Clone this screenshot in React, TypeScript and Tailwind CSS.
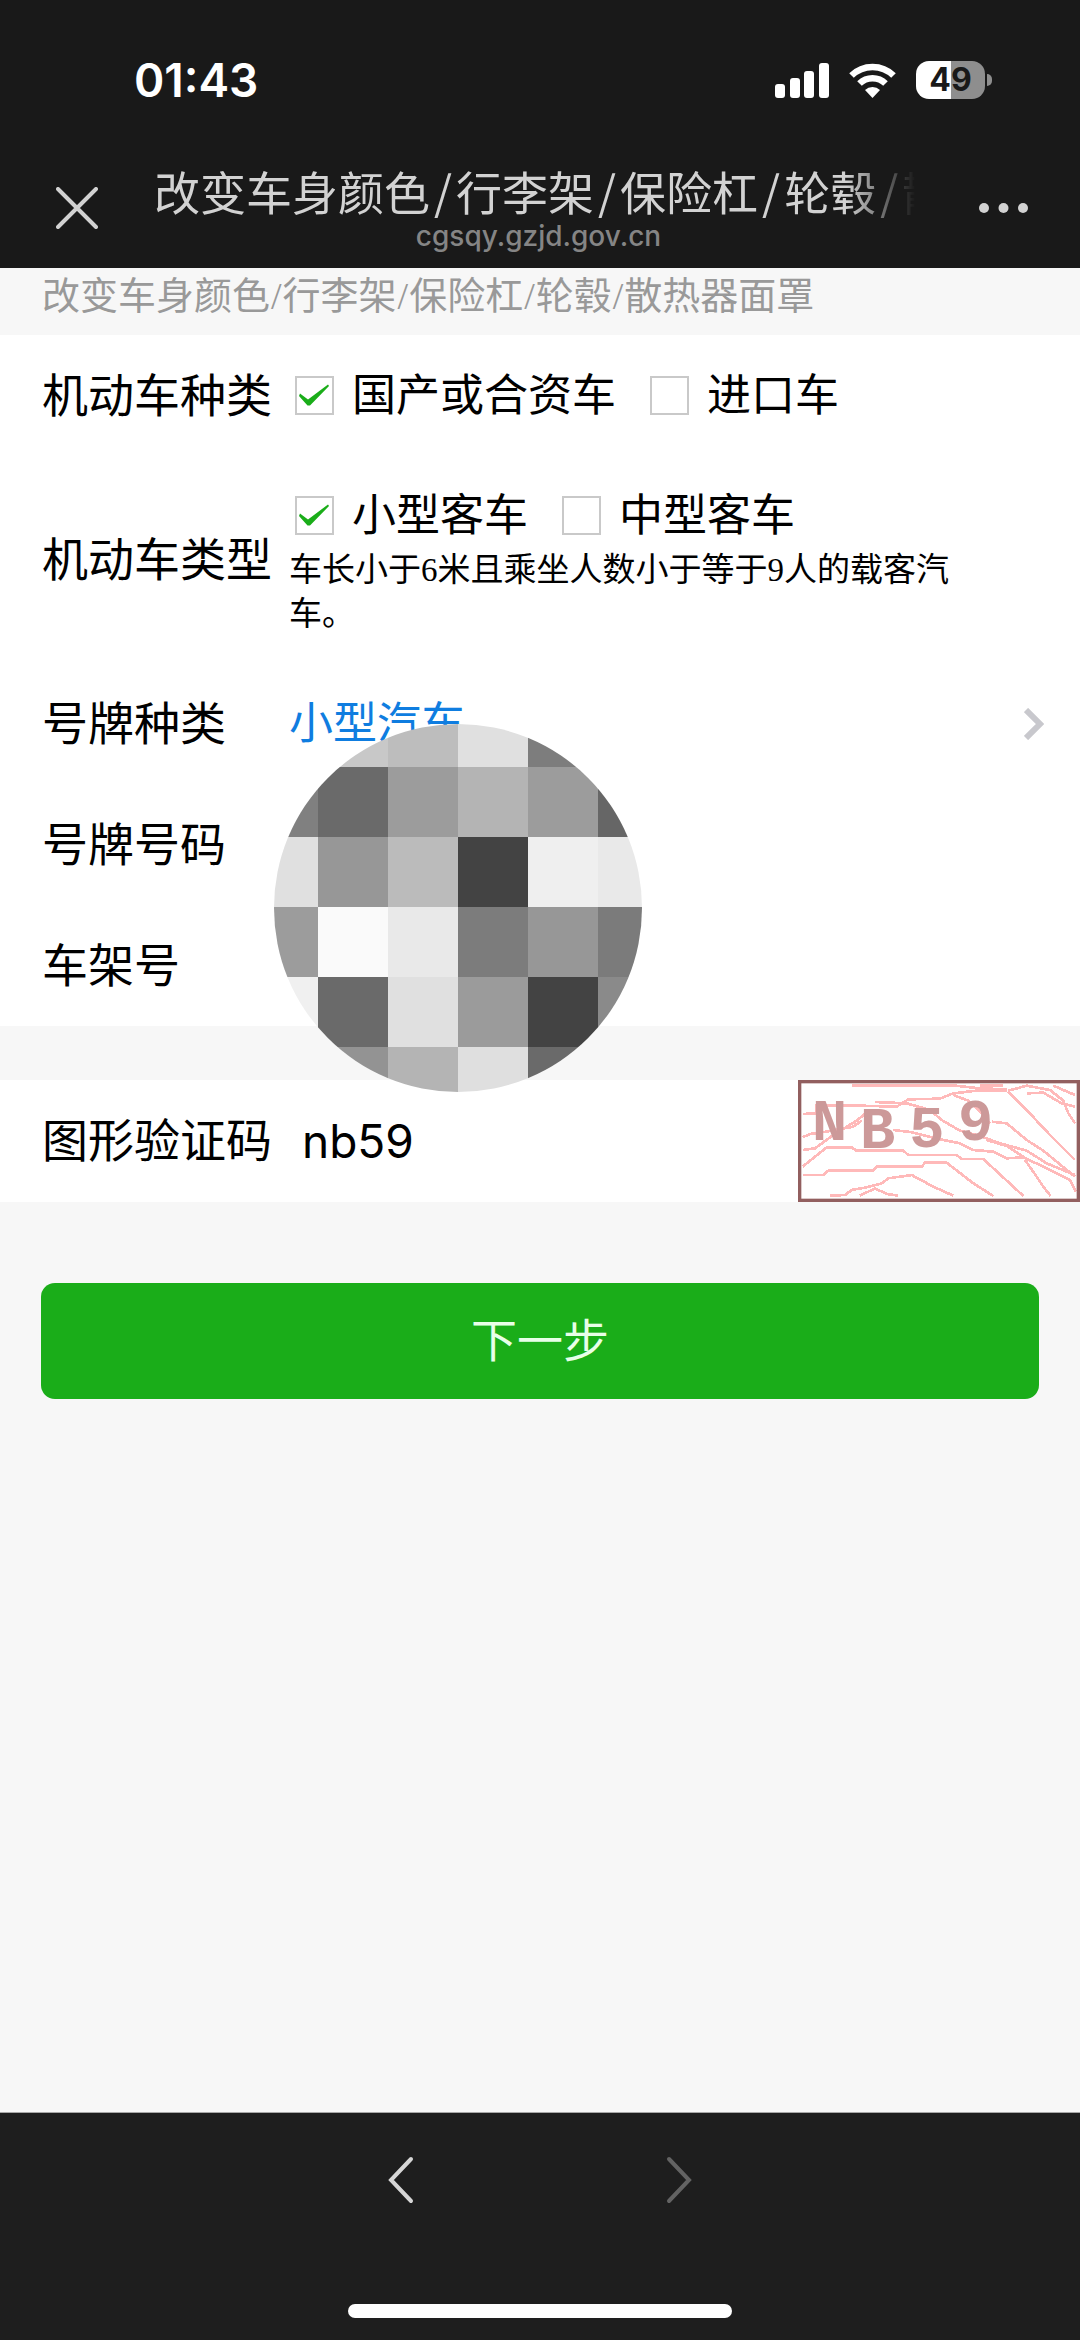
import { useState } from 'react';

const PAGE_TITLE = ['改变车身颜色', '行李架', '保险杠', '轮毂', '散热器面罩'];

// rows of the privacy mosaic, one grey per 70px cell
const MOSAIC = [
  ['#c8c8c8', '#c8c8c8', '#bdbdbd', '#e0e0e0', '#7d7d7d', '#7d7d7d'],
  ['#808080', '#6a6a6a', '#9c9c9c', '#b4b4b4', '#9c9c9c', '#666666'],
  ['#e0e0e0', '#979797', '#bbbbbb', '#434343', '#efefef', '#e9e9e9'],
  ['#9c9c9c', '#fafafa', '#e9e9e9', '#7c7c7c', '#979797', '#7b7b7b'],
  ['#f0f0f0', '#6a6a6a', '#e0e0e0', '#9b9b9b', '#434343', '#8a8a8a'],
  ['#939393', '#939393', '#b4b4b4', '#dfdfdf', '#6a6a6a', '#6a6a6a'],
];

const NOISE = [
  '275,77 585,77 660,85 740,88',
  '660,77 730,77',
  '128,162 168,160 168,137 300,137 410,140 445,118 540,116 580,100 650,92 740,92',
  '345,126 440,130 510,150 545,180 600,212 660,228 720,250 800,272 860,310 945,345',
  '128,270 165,265 220,225 290,182 330,150',
  '128,232 150,222 200,215 280,200 305,182',
  '128,320 200,262 275,262 290,272 430,272 445,285 590,285 605,297 670,297 790,408',
  '128,345 190,345 205,332 340,332 350,320 485,320 495,308 560,308 640,370 700,408',
  '210,407 255,405 275,390 320,382 365,370 385,355 455,345 520,380 580,407',
  '300,407 345,385 380,402 415,407',
  '745,95 800,150 870,225 945,300',
  '695,185 740,190 800,240 850,272 890,305 945,350',
  '400,210 450,216 550,240 600,250 640,270 700,275 740,295 790,292 850,320 930,360 948,395',
  '745,92 800,77 870,90 910,122 925,160 945,190',
  '800,100 850,98 905,130 945,140',
  '880,77 910,90 945,105',
  '795,300 830,350 850,380 872,408',
  '580,105 625,122 660,155 690,190',
  '680,240 740,258 790,290',
];

function StatusBar() {
  return (
    <div className="flex h-[150px] items-center justify-between pt-[10px] pr-[88px] pl-[134px] font-['Inter',sans-serif]">
      <span className="text-[46px] leading-none font-semibold text-white">01:43</span>
      <div className="flex items-center gap-5">
        <svg width="54" height="35" viewBox="0 0 54 35" fill="#fff">
          <rect x="0" y="21" width="10" height="14" rx="3" />
          <rect x="15" y="15" width="10" height="20" rx="3" />
          <rect x="29" y="8" width="10" height="27" rx="3" />
          <rect x="44" y="0" width="10" height="35" rx="3" />
        </svg>
        <svg width="47" height="35" viewBox="0 0 47 35" fill="none" stroke="#fff" strokeWidth="6.5">
          <path d="M2.5 12.5a30 30 0 0 1 42 0" />
          <path d="M10.5 20.5a18.5 18.5 0 0 1 26 0" />
          <path d="M23.5 35l-7.5-8a11 11 0 0 1 15 0z" fill="#fff" stroke="none" />
        </svg>
        <div className="flex items-center gap-[2px]">
          <div className="flex h-[38px] w-[69px] items-center justify-center rounded-[13px] bg-linear-to-r from-white from-51% to-[#8e8e8e] to-51%">
            <span className="text-[32px] leading-none font-bold text-[#191919]">49</span>
          </div>
          <div className="h-3 w-[5px] rounded-r-full bg-[#8e8e8e]" />
        </div>
      </div>
    </div>
  );
}

function NavBar() {
  return (
    <div className="flex h-[118px] items-center pr-[52px] pb-[2px] pl-14">
      <button aria-label="关闭">
        <svg width="42" height="42" viewBox="0 0 42 42" stroke="#d2d2d2" strokeWidth="4" strokeLinecap="round">
          <path d="M2 2l38 38M40 2L2 40" />
        </svg>
      </button>
      <div className="mx-14 min-w-0 flex-1 pb-2">
        <h1 className="overflow-hidden text-[46px] leading-[64px] whitespace-nowrap text-[#d2d2d2] [mask-image:linear-gradient(to_right,#000_90%,transparent_99%)]">
          {PAGE_TITLE.map((part, i) => (
            <span key={part}>
              {i > 0 && <span className="mx-1">/</span>}
              {part}
            </span>
          ))}
        </h1>
        <p className="text-center font-['Inter',sans-serif] text-[28px] leading-7 font-medium text-[#858585]">cgsqy.gzjd.gov.cn</p>
      </div>
      <button aria-label="更多">
        <svg width="49" height="12" viewBox="0 0 49 12" fill="#d2d2d2">
          <circle cx="5" cy="6" r="5" />
          <circle cx="24.5" cy="6" r="5" />
          <circle cx="44" cy="6" r="5" />
        </svg>
      </button>
    </div>
  );
}

function CheckOption({ label, checked, onChange }: { label: string; checked: boolean; onChange: () => void }) {
  return (
    <label className="flex items-center gap-[18px] text-[44px] leading-[64px]">
      <span className="relative block size-[39px]">
        <input
          type="checkbox"
          checked={checked}
          onChange={onChange}
          className="peer block size-full appearance-none border-2 border-[#c9c9c9] bg-white"
        />
        <svg className="pointer-events-none absolute inset-0 hidden peer-checked:block" viewBox="0 0 39 39" fill="#1aad19">
          <path d="M5 17.5L13 23.5L33 8.5L34 10L15 29.5L12.5 29.5L4 20z" />
        </svg>
      </span>
      {label}
    </label>
  );
}

function Mosaic() {
  return (
    <svg className="absolute top-[61px] left-[274px] z-10" width="368" height="368" viewBox="0 0 368 368">
      <clipPath id="mosaic">
        <circle cx="184" cy="184" r="184" />
      </clipPath>
      <g clipPath="url(#mosaic)">
        {MOSAIC.map((row, y) =>
          row.map((fill, x) => (
            <rect key={`${x}-${y}`} x={x * 70 - 26} y={y * 70 - 27} width="70" height="70" fill={fill} />
          ))
        )}
      </g>
    </svg>
  );
}

function Captcha() {
  return (
    <button aria-label="刷新验证码" className="shrink-0">
      <svg width="282" height="122" viewBox="114 60 846 366">
        <rect x="114" y="60" width="846" height="366" fill="#fff" />
        <g fill="none" stroke="#ffb9b9" strokeWidth="8" shapeRendering="crispEdges">
          {NOISE.map((points) => (
            <polyline key={points} points={points} />
          ))}
        </g>
        <g fill="#cc9999" fontFamily="Liberation Mono, monospace" fontWeight="bold" fontSize="176">
          <text x="156" y="240">N</text>
          <text x="300" y="265">B</text>
          <text x="448" y="262">5</text>
          <text x="594" y="240">9</text>
        </g>
        <rect x="119" y="65" width="836" height="356" fill="none" stroke="#925f5f" strokeWidth="10" />
      </svg>
    </button>
  );
}

export default function App() {
  const [origin, setOrigin] = useState('domestic');
  const [size, setSize] = useState('small');
  const [code, setCode] = useState('nb59');

  return (
    <div className="flex min-h-screen flex-col bg-[#f7f7f7] font-['Noto_Sans_CJK_SC',sans-serif] text-black">
      <header className="bg-[#191919]">
        <StatusBar />
        <NavBar />
      </header>

      <main className="flex-1">
        <p className="px-[42px] pb-[11px] font-['Liberation_Serif','Noto_Sans_CJK_SC',sans-serif] text-[38px] leading-[56px] text-[#999]">
          {PAGE_TITLE.map((part, i) => (
            <span key={part}>
              {i > 0 && <span className="mx-px">/</span>}
              {part}
            </span>
          ))}
        </p>

        <form className="font-['Liberation_Sans','Noto_Sans_CJK_SC',sans-serif] text-[46px] leading-[60px]">
          <div className="bg-white">
            <div className="flex min-h-[121px] items-center pl-[42px]">
              <span className="w-[253px] shrink-0">机动车种类</span>
              <div className="flex gap-[34px]">
                <CheckOption label="国产或合资车" checked={origin === 'domestic'} onChange={() => setOrigin('domestic')} />
                <CheckOption label="进口车" checked={origin === 'import'} onChange={() => setOrigin('import')} />
              </div>
            </div>
            <div className="flex min-h-[207px] items-center pr-28 pl-[42px]">
              <span className="w-[247px] shrink-0">机动车类型</span>
              <div>
                <div className="flex gap-[34px] pl-[6px]">
                  <CheckOption label="小型客车" checked={size === 'small'} onChange={() => setSize('small')} />
                  <CheckOption label="中型客车" checked={size === 'medium'} onChange={() => setSize('medium')} />
                </div>
                <p className="font-['Liberation_Serif','Noto_Sans_CJK_SC',sans-serif] text-[33px] leading-[44px]">
                  车长小于6米且乘坐人数小于等于9人的载客汽车。
                </p>
              </div>
            </div>
            <div className="relative">
              <div className="flex h-[121px] items-center pr-9 pl-[42px]">
                <span className="w-[247px] shrink-0">号牌种类</span>
                <button type="button" className="flex flex-1 items-center justify-between text-[44px] text-[#0f7de0]">
                  小型汽车
                  <svg width="20" height="32" viewBox="0 0 20 32" fill="none" stroke="#c8c8cd" strokeWidth="6">
                    <path d="M2 2l14 14L2 30" />
                  </svg>
                </button>
              </div>
              <div className="flex h-[121px] items-center pr-9 pl-[42px]">
                <label htmlFor="plate" className="w-[247px] shrink-0">号牌号码</label>
                <input id="plate" className="min-w-0 flex-1 text-[#0f7de0] outline-none" />
              </div>
              <div className="flex h-[121px] items-center pr-9 pl-[42px]">
                <label htmlFor="vin" className="w-[247px] shrink-0">车架号</label>
                <input id="vin" className="min-w-0 flex-1 outline-none" />
              </div>
              <Mosaic />
            </div>
          </div>

          <div className="mt-[54px] flex items-center bg-white pl-[42px]">
            <label htmlFor="captcha" className="w-[260px] shrink-0">图形验证码</label>
            <input
              id="captcha"
              value={code}
              onChange={(e) => setCode(e.target.value)}
              className="min-w-0 flex-1 font-['Inter',sans-serif] outline-none"
            />
            <Captcha />
          </div>

          <div className="px-[41px] pt-[81px]">
            <button type="button" className="h-[116px] w-full rounded-[14px] bg-[#1aad19] text-[#e8ffe8]">下一步</button>
          </div>
        </form>
      </main>

      <footer className="flex flex-col items-center border-t border-[#a8a8a8] bg-[#1e1e1e] pt-[43px] pb-[22px]">
        <div className="flex gap-[252px]">
          <button aria-label="后退">
            <svg width="26" height="48" viewBox="0 0 26 48" fill="none" stroke="#d6d6d6" strokeWidth="4" strokeLinecap="round">
              <path d="M23 3L3 24l20 21" />
            </svg>
          </button>
          <button aria-label="前进" disabled>
            <svg width="26" height="48" viewBox="0 0 26 48" fill="none" stroke="#636363" strokeWidth="4" strokeLinecap="round">
              <path d="M3 3l20 21L3 45" />
            </svg>
          </button>
        </div>
        <div className="mt-[100px] h-[14px] w-96 rounded-full bg-white" />
      </footer>
    </div>
  );
}
